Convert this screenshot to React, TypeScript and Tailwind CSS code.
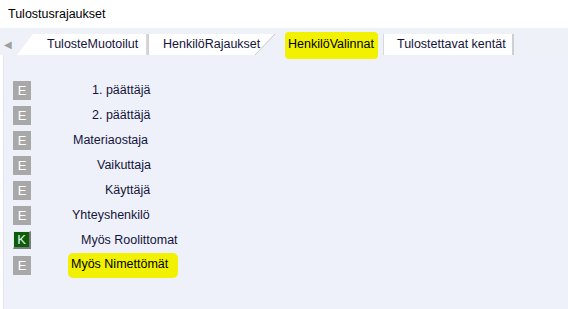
const rows = [
  { code: "E", label: "1. päättäjä", ml: "ml-[61px]" },
  { code: "E", label: "2. päättäjä", ml: "ml-[61px]" },
  { code: "E", label: "Materiaostaja", ml: "ml-[42px]" },
  { code: "E", label: "Vaikuttaja", ml: "ml-[66px]" },
  { code: "E", label: "Käyttäjä", ml: "ml-[74px]" },
  { code: "E", label: "Yhteyshenkilö", ml: "ml-[41px]" },
  { code: "K", label: "Myös Roolittomat", ml: "ml-[50px]" },
  { code: "E", label: "Myös Nimettömät", ml: "ml-[37px]", mark: true },
];

function CodeBox({ code }: { code: string }) {
  if (code === "K") {
    return (
      <div className="w-[18px] h-[18px] flex items-center justify-center bg-[#0b5d0b] text-[#e8f5e8] text-[13px] leading-none border-t border-l border-[#e8e8e8] border-r-2 border-b-2 border-r-[#7a7a7a] border-b-[#7a7a7a]">
        K
      </div>
    );
  }
  return (
    <div className="w-[18px] h-[19px] flex items-center justify-center bg-[#a8a8a8] text-white text-[13px] leading-none">
      E
    </div>
  );
}

export default function App() {
  return (
    <div className="w-[568px] h-[309px] bg-white flex flex-col font-['Liberation_Sans',Arial,sans-serif] text-[#14143a] overflow-hidden">
      {/* Title */}
      <div className="h-[28px] flex items-center px-[8px] text-[12.5px] text-black">Tulostusrajaukset</div>

      {/* Tab strip */}
      <div className="h-[27px] bg-[#eef1f8] flex items-end text-[12.5px] whitespace-nowrap">
        <div className="w-[17px] h-[21px] flex items-center pl-[4px] text-[#a0a0a0] text-[10px]">◀</div>
        <div className="w-[131px] h-[21px] bg-white [clip-path:polygon(16px_0,100%_0,100%_100%,0_100%)] border-r-2 border-[#d6d6d6] flex items-center pl-[30px]">
          TulosteMuotoilut
        </div>
        <div className="w-[125px] h-[21px] bg-white border-l border-[#d0d0d0] flex items-center pl-[14px]">
          HenkilöRajaukset
        </div>
        <div className="relative -ml-[18px] w-[128px] h-[23px] flex items-center">
          <svg className="absolute left-0 top-0" width="128" height="23">
            <polygon points="0,23 20,2 128,2 128,23" fill="#eef1f8" />
            <line x1="0" y1="23" x2="20" y2="2" stroke="#c8c8c8" strokeWidth="1" />
          </svg>
          <span className="relative ml-[30px] mt-[4px] bg-[#f2f200] pl-[3px] pr-[4px] pt-[3px] pb-[6px] rounded-[4px] text-black">
            HenkilöValinnat
          </span>
        </div>
        <div className="w-[131px] h-[21px] bg-white border-l border-[#d8d8d8] border-r-2 border-r-[#cfcfcf] flex items-center pl-[13px]">
          Tulostettavat kentät
        </div>
      </div>

      {/* Panel */}
      <div className="flex-1 ml-[3px] bg-[#eef1f9] border-l border-[#e2e5ee] pt-[26px] pl-[9px] flex flex-col">
        {rows.map((r) => (
          <div key={r.label} className="h-[25px] flex items-start">
            <CodeBox code={r.code} />
            <span
              className={
                r.mark
                  ? `${r.ml} mt-[-3px] pl-[3px] pr-[10px] pt-[4px] pb-[6px] bg-[#f2f200] rounded-[5px] text-[12.5px] leading-[15px] text-black`
                  : `${r.ml} text-[12.5px] leading-[18px]`
              }
            >
              {r.label}
            </span>
          </div>
        ))}
      </div>
    </div>
  );
}
